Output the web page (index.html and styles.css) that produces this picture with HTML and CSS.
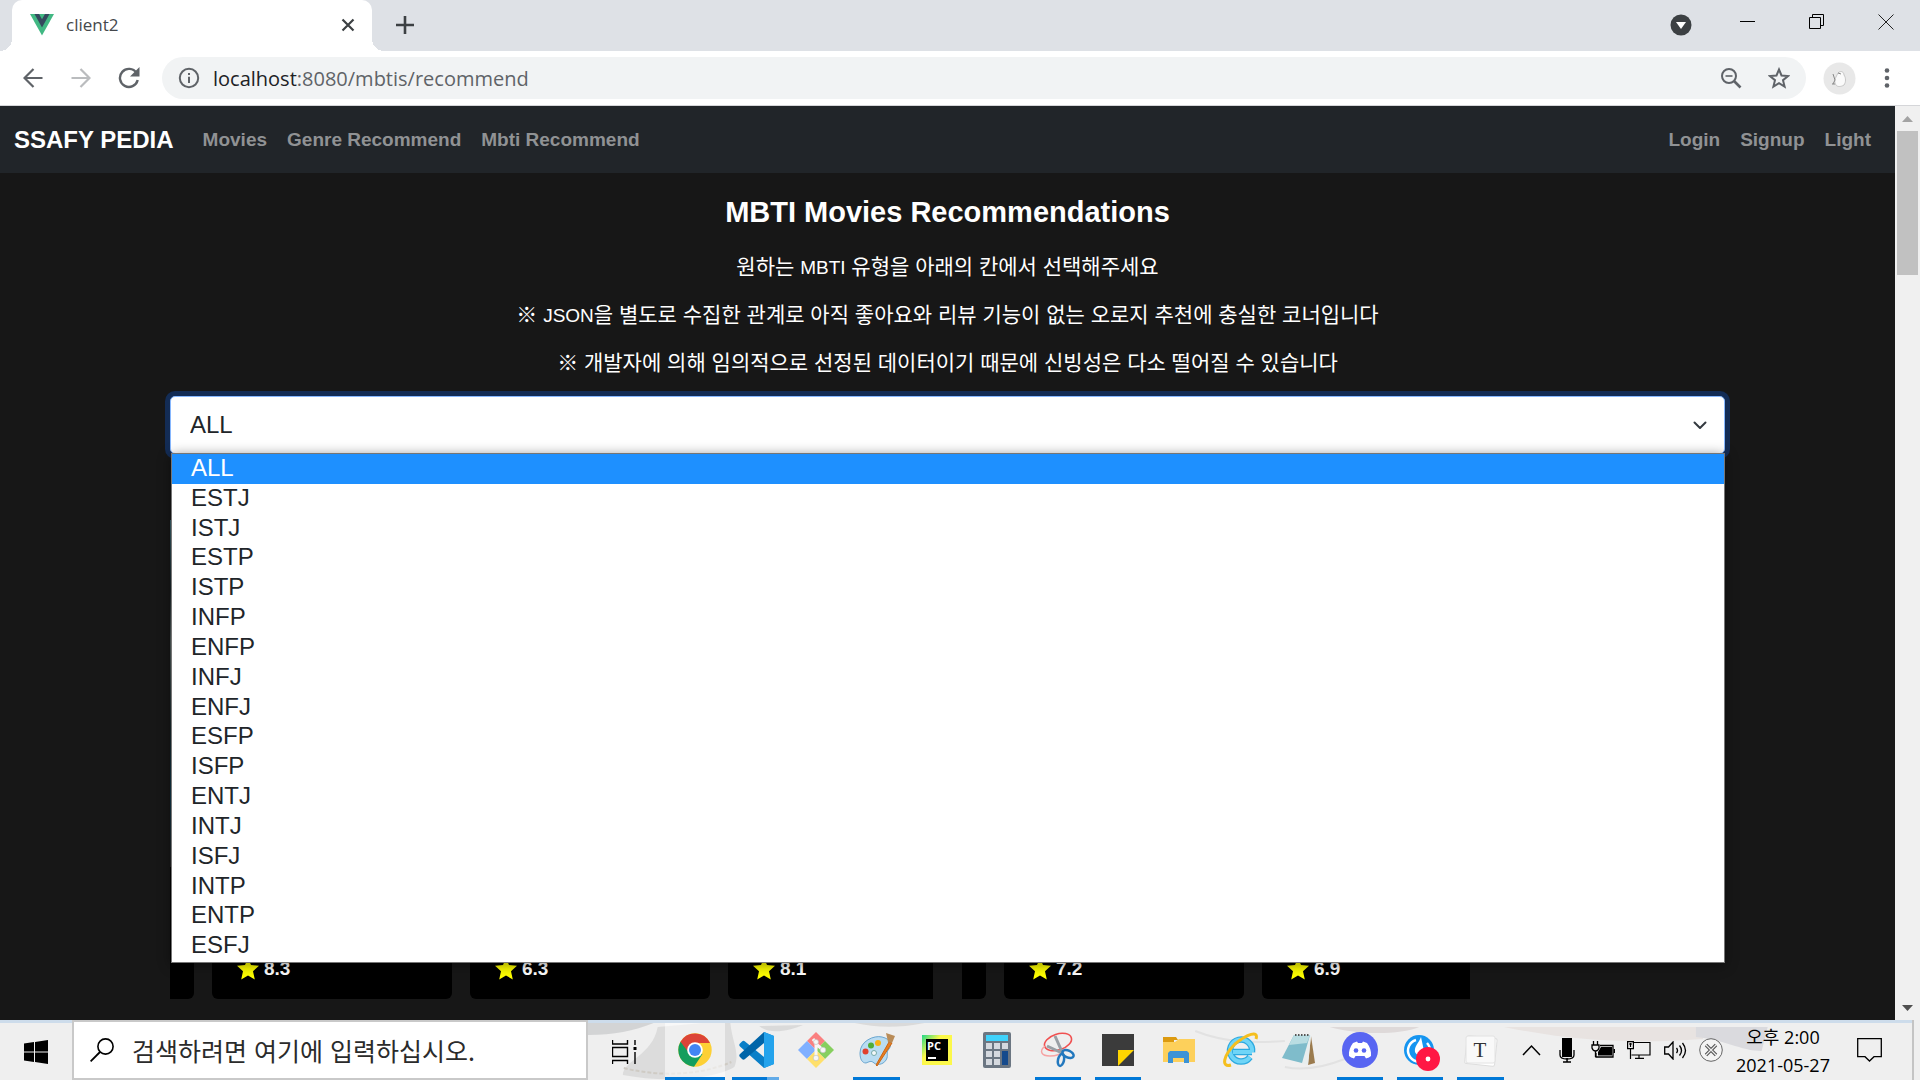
FILE: index.html
```html
<!DOCTYPE html>
<html lang="ko">
<head>
<meta charset="utf-8">
<title>client2</title>
<link rel="stylesheet" href="styles.css">
</head>
<body>
<header class="browser">
  <div class="tabstrip">
    <div class="tab">
      <svg class="favicon" width="24" height="22" viewBox="0 0 24 22"><path fill="#41b883" d="M0 0h24L12 21.500z"/><path fill="#35495e" d="M4.500 0H9l3 5.200L15 0h4.500L12 13.500z"/></svg>
      <span class="tab-title">client2</span>
      <button class="icon-btn" aria-label="탭 닫기"><svg width="14" height="14" viewBox="0 0 14 14"><path d="M1.500 1.500l11 11m0-11l-11 11" stroke="#3c4043" stroke-width="2.200"/></svg></button>
    </div>
    <button class="icon-btn new-tab" aria-label="새 탭"><svg width="18" height="18" viewBox="0 0 18 18"><path d="M9 0v18M0 9h18" stroke="#3c4043" stroke-width="2.600"/></svg></button>
    <div class="window-controls">
      <button class="icon-btn caret" aria-label="탭 검색"><svg width="22" height="22" viewBox="0 0 22 22"><circle cx="11" cy="11" r="10.500" fill="#3c4043"/><path d="M6 8h10l-5 7z" fill="#fff"/></svg></button>
      <button class="icon-btn" aria-label="최소화"><svg width="16" height="16" viewBox="0 0 16 16"><path d="M0 7.500h15" stroke="#000"/></svg></button>
      <button class="icon-btn" aria-label="복원"><svg width="16" height="16" viewBox="0 0 16 16"><path d="M.5 3.500h11v11H.5zM3.500 3.500v-3h11v11h-3" fill="none" stroke="#000"/></svg></button>
      <button class="icon-btn" aria-label="닫기"><svg width="16" height="16" viewBox="0 0 16 16"><path d="M.5.5l15 15m0-15l-15 15" stroke="#222"/></svg></button>
    </div>
  </div>
  <div class="toolbar">
    <button class="icon-btn nav-btn" aria-label="뒤로"><svg width="20" height="20" viewBox="0 0 20 20"><path d="M19.500 10H2M10.500 1L1.500 10l9 9" fill="none" stroke="#5f6368" stroke-width="2.200"/></svg></button>
    <button class="icon-btn nav-btn" aria-label="앞으로"><svg width="20" height="20" viewBox="0 0 20 20"><path d="M.5 10H18M9.500 1l9 9-9 9" fill="none" stroke="#babcbe" stroke-width="2.200"/></svg></button>
    <button class="icon-btn nav-btn" aria-label="새로고침"><svg width="22" height="22" viewBox="0 0 22 22"><path d="M18.500 6A9 9 0 1 0 19.700 13" fill="none" stroke="#5f6368" stroke-width="2.400"/><path d="M21.500 0v9.500H12z" fill="#5f6368"/></svg></button>
    <div class="omnibox">
      <svg width="22" height="22" viewBox="0 0 22 22"><circle cx="11" cy="11" r="9.200" fill="none" stroke="#5f6368" stroke-width="2"/><path d="M11 9.800V16M11 6v2" stroke="#5f6368" stroke-width="2"/></svg>
      <div class="url"><span class="host">localhost</span>:8080/mbtis/recommend</div>
      <button class="icon-btn" aria-label="확대/축소"><svg width="22" height="22" viewBox="0 0 22 22"><circle cx="9" cy="9" r="7" fill="none" stroke="#5f6368" stroke-width="2"/><path d="M5.500 9h7" stroke="#5f6368" stroke-width="1.600"/><path d="M14 14l6.500 6.500" stroke="#5f6368" stroke-width="2.600"/></svg></button>
      <button class="icon-btn" aria-label="북마크"><svg width="22" height="22" viewBox="0 0 22 22"><path d="M11 2.500l2.500 6 6.500.5-5 4.200 1.600 6.400L11 16.200l-5.600 3.400L7 13.200 2 9l6.500-.5z" fill="none" stroke="#5f6368" stroke-width="2"/></svg></button>
    </div>
    <button class="icon-btn avatar" aria-label="프로필"><svg width="33" height="33" viewBox="0 0 33 33"><circle cx="16.500" cy="16.500" r="16" fill="#e8e8e8"/><path d="M15 11c3-3 6-1 6 2 2 3 2 7 0 10-3 2-7 2-8 0-2-3-1-6 0-8z" fill="#fafafa" stroke="#bbb" stroke-width=".8"/><path d="M10 12l2 6-2 4M9 22h3M15 11l3 1" fill="none" stroke="#888"/></svg></button>
    <button class="icon-btn menu" aria-label="메뉴"><svg width="6" height="20" viewBox="0 0 6 20"><g fill="#5f6368"><circle cx="3" cy="2.500" r="2.300"/><circle cx="3" cy="10" r="2.300"/><circle cx="3" cy="17.500" r="2.300"/></g></svg></button>
  </div>
</header>

<div class="viewport">
  <div class="page">
    <nav class="navbar">
      <a class="brand" href="#">SSAFY PEDIA</a>
      <a href="#">Movies</a>
      <a href="#">Genre Recommend</a>
      <a href="#">Mbti Recommend</a>
      <div class="account">
        <a href="#">Login</a>
        <a href="#">Signup</a>
        <a href="#">Light</a>
      </div>
    </nav>
    <main class="content">
      <h1>MBTI Movies Recommendations</h1>
      <p><label for="mbti">원하는 <span class="latin">MBTI</span> 유형을 아래의 칸에서 선택해주세요</label></p>
      <p>※ <span class="latin">JSON</span>을 별도로 수집한 관계로 아직 좋아요와 리뷰 기능이 없는 오로지 추천에 충실한 코너입니다</p>
      <p>※ 개발자에 의해 임의적으로 선정된 데이터이기 때문에 신빙성은 다소 떨어질 수 있습니다</p>
      <div class="picker">
        <select id="mbti"><option>ALL</option><option>ESTJ</option><option>ISTJ</option><option>ESTP</option></select>
        <svg class="chevron" width="14" height="9" viewBox="0 0 14 9"><path d="M1.500 1.500L7 7l5.500-5.500" fill="none" stroke="#343a40" stroke-width="2" stroke-linecap="round" stroke-linejoin="round"/></svg>
        <ul class="options" role="listbox" aria-label="MBTI">
          <li role="option" class="active" aria-selected="true">ALL</li>
          <li role="option">ESTJ</li>
          <li role="option">ISTJ</li>
          <li role="option">ESTP</li>
          <li role="option">ISTP</li>
          <li role="option">INFP</li>
          <li role="option">ENFP</li>
          <li role="option">INFJ</li>
          <li role="option">ENFJ</li>
          <li role="option">ESFP</li>
          <li role="option">ISFP</li>
          <li role="option">ENTJ</li>
          <li role="option">INTJ</li>
          <li role="option">ISFJ</li>
          <li role="option">INTP</li>
          <li role="option">ENTP</li>
          <li role="option">ESFJ</li>
        </ul>
      </div>
      <div class="carousels">
        <section class="carousel">
          <article class="card"><div class="poster"></div></article>
          <article class="card"><div class="poster"></div><div class="rating"><svg class="star" viewBox="0 0 22 22"><use href="#star"/></svg>8.3</div></article>
          <article class="card"><div class="poster"></div><div class="rating"><svg class="star" viewBox="0 0 22 22"><use href="#star"/></svg>6.3</div></article>
          <article class="card"><div class="poster"></div><div class="rating"><svg class="star" viewBox="0 0 22 22"><use href="#star"/></svg>8.1</div></article>
        </section>
        <section class="carousel">
          <article class="card"><div class="poster"></div></article>
          <article class="card"><div class="poster"></div><div class="rating"><svg class="star" viewBox="0 0 22 22"><use href="#star"/></svg>7.2</div></article>
          <article class="card"><div class="poster"></div><div class="rating"><svg class="star" viewBox="0 0 22 22"><use href="#star"/></svg>6.9</div></article>
        </section>
      </div>
    </main>
  </div>
  <div class="scrollbar">
    <svg width="11" height="6" viewBox="0 0 11 6"><path d="M0 6h11L5.500 0z" fill="#a3a3a3"/></svg>
    <div class="thumb"></div>
    <svg class="down" width="11" height="6" viewBox="0 0 11 6"><path d="M0 0h11L5.500 6z" fill="#505050"/></svg>
  </div>
</div>

<footer class="taskbar">
  <button class="start" aria-label="시작"><svg width="24" height="24" viewBox="0 0 24 24"><path d="M0 3.500l10-1.400V11.400H0zM11 2l13-2v11.400H11zM0 12.400h10v9.500L0 20.500zM11 12.400h13V24l-13-2z"/></svg></button>
  <div class="search">
    <svg width="24" height="24" viewBox="0 0 24 24"><circle cx="15.500" cy="8.500" r="7.600" fill="none" stroke="#000" stroke-width="1.600"/><path d="M10 14L.6 23.400" stroke="#000" stroke-width="1.800"/></svg>
    <input type="text" aria-label="검색" placeholder="검색하려면 여기에 입력하십시오.">
  </div>
  <div class="dock">
    <svg class="wallpaper" viewBox="0 0 1330 57" preserveAspectRatio="none">
      <path d="M0 0h66c-20 8-40 12-66 12z" fill="#d3d4d5"/>
      <path d="M70 4l45-4h28c2 20 10 30 4 44-20 12-70 16-112 8 0-14 30-20 35-48z" fill="#dcdcdc"/>
      <path d="M36 45c40 10 80 6 108-6" stroke="#cfcbc4" stroke-width="2" fill="none" stroke-dasharray="4 2"/>
      <path d="M172 3c10 9 30 5 44-1zM268 0c20 4 40 6 70 0z" fill="#dadada"/>
      <path d="M610 8c30 12 60 12 90 10M700 44c20 4 40 0 60-8" stroke="#e2e2e2" stroke-width="2" fill="none"/>
      <path d="M745 4h90c-20 8-60 8-90 0z" fill="#ded9d9"/>
      <path d="M920 4h200v12c-80 6-140 0-200-12z" fill="#e8e3e1"/>
      <path d="M1113 4h72l-6 24c-20 0-40-12-66-14z" fill="#dadade"/>
    </svg>
    <button class="task-view" aria-label="작업 보기"><svg width="25" height="24" viewBox="0 0 25 24"><path d="M.5 0v4h15V0M.5 24v-3.500h15V24M.5 7.500h15v9H.5zM23 0v5M23 12v12" fill="none" stroke="#000" stroke-width="1.400"/><path d="M21.500 7h3v3h-3z"/></svg></button>
    <div class="apps">
      <button class="app running current" aria-label="Chrome"><svg viewBox="0 0 36 36"><circle cx="18" cy="18" r="16.700" fill="#fdd035"/><path d="M18 18L3.500 9.700A16.700 16.700 0 0 0 17 34.700L25.500 22z" fill="#149e5d"/><path d="M3.500 9.700A16.700 16.700 0 0 1 33 11H18l-7.500 8z" fill="#dc4437"/><circle cx="18" cy="18" r="7.800" fill="#fff"/><circle cx="18" cy="18" r="6" fill="#4285f4"/></svg></button>
      <button class="app running grouped" aria-label="VS Code"><svg viewBox="0 0 36 36"><path d="M26 0l10 4v28l-10 4L2 14.500c-1-1-1-2 0-3l2-2c1-1 2-1 3 0L26 25z" fill="#0a7fc8"/><path d="M26 0L2 22c-1 1-1 2 0 3l2 2c1 1 2 1 3 0L26 11z" fill="#0065a9"/><path d="M26 0l10 4v28l-10 4z" fill="#24a3ec"/></svg></button>
      <button class="app" aria-label="Git"><svg viewBox="0 0 36 36"><path d="M18 0l9 9-9 9-9-9z" fill="#fa8080"/><path d="M27 9l9 9-9 9-9-9z" fill="#86cf5f"/><path d="M9 9l9 9-9 9-9-9z" fill="#80b0ff"/><path d="M18 18l9 9-9 9-9-9z" fill="#ffe06b"/><path d="M15 7l3 4v15M18 12l7 6" stroke="#f7f7f7" stroke-width="3" fill="none"/><g fill="#f7f7f7" stroke="#bbb" stroke-width=".6"><circle cx="18" cy="10" r="2.500"/><circle cx="25" cy="18" r="2.800"/><circle cx="18" cy="26" r="2.800"/></g></svg></button>
      <button class="app running" aria-label="그림판"><svg viewBox="0 0 36 36"><path d="M2 21C2 9 16 3 24 5c9 2 10 8 7 12-3 3-1 5-2 9-2 6-9 8-13 5-3-3-5-1-8 0-4 0-6-4-6-10z" fill="#b9dcf2" stroke="#6ba6cf"/><circle cx="16" cy="21" r="2.500" fill="#f4f8fa" stroke="#7aa"/><circle cx="7.500" cy="19.500" r="3" fill="#e0402e"/><circle cx="13" cy="13.500" r="3" fill="#4fad38"/><circle cx="20" cy="11" r="3" fill="#f8b117"/><path d="M31 10l3 1-15 23-1-1z" fill="#e87e20" stroke="#c96515"/><path d="M28 1l9 3-3 7-4-1z" fill="#b98c58"/></svg></button>
      <button class="app" aria-label="PyCharm"><svg viewBox="0 0 36 36"><defs><linearGradient id="pc" x2="1" y2=".8"><stop stop-color="#21d789"/><stop offset=".4" stop-color="#fcf84a"/><stop offset="1" stop-color="#fcf84a"/></linearGradient></defs><path d="M3 3h30v30H3z" fill="url(#pc)"/><path d="M7 7h22v22H7z"/><path d="M9 25h8v2H9z" fill="#fff"/><text x="8" y="18" fill="#fff" class="pc-label">PC</text></svg></button>
      <button class="app" aria-label="계산기"><svg viewBox="0 0 36 36"><rect x="4" width="28" height="36" rx="2" fill="#6b7682"/><path d="M7 3h22v6H7z" fill="#3fd2fb"/><g fill="#d5d9df"><path d="M7 11h6v6H7zM15 11h6v6h-6zM23 11h6v6h-6zM7 19h6v6H7zM15 19h6v6h-6zM7 27h6v6H7zM15 27h6v6h-6z"/></g><path d="M23 19h6v14h-6z" fill="#154a8c"/></svg></button>
      <button class="app running" aria-label="캡처 도구"><svg viewBox="0 0 36 36"><g fill="none"><ellipse cx="18" cy="10" rx="14" ry="8" transform="rotate(-18 18 10)" stroke="#f05050" stroke-width="1.600"/><path d="M5 14c-6 5-4 10 5 10 6 0 11-2 14-5" stroke="#f6a3a3" stroke-width="1.400"/><path d="M15 4l8 18M7 14l15 7" stroke="#999fa5" stroke-width="3"/><ellipse cx="21" cy="28" rx="3" ry="6" transform="rotate(12 21 28)" stroke="#2278be" stroke-width="2.500"/><ellipse cx="28" cy="22" rx="6" ry="3.500" transform="rotate(25 28 22)" stroke="#2278be" stroke-width="2.500"/></g></svg></button>
      <button class="app running" aria-label="스티커 메모"><svg viewBox="0 0 36 36"><path d="M2 2h32v32H2z" fill="#3b3b3b"/><path d="M18 18h16L18 34z" fill="#ffd500"/></svg></button>
      <button class="app" aria-label="파일 탐색기"><svg viewBox="0 0 36 36"><path d="M2 5h13l2 3h-4v4H2z" fill="#dc9a10"/><path d="M2 10h12l4-3h16v23H2z" fill="#fdd05b"/><path d="M7 31V21l2-2h17l2 2v10h-5v-5H12v5z" fill="#3c93d6"/></svg></button>
      <button class="app" aria-label="Internet Explorer"><svg viewBox="0 0 36 36"><path d="M31 20H12M29 25a11 11 0 1 1 2-5" fill="none" stroke="#2da9df" stroke-width="6.500"/><path d="M31 20H12M29 25a11 11 0 1 1 2-5" fill="none" stroke="#6fd5f7" stroke-width="4"/><path d="M10 33C0 36 2 24 14 12 26 2 38-2 35 7" fill="none" stroke="#f5bf1e" stroke-width="3"/></svg></button>
      <button class="app" aria-label="메모장"><svg viewBox="0 0 36 36"><path d="M30 4l4 27-7 2z" fill="#9b7b4e"/><path d="M13 3h17l-3 30-8-2z" fill="#e8eeee"/><path d="M13 3h16l-8 28L1 26z" fill="#7fbccb"/><path d="M13 3h16l-3 8-18 2z" fill="#b9dde2"/><path d="M14 3h15" stroke="#555" stroke-width="2" stroke-dasharray="1.500 1.500"/></svg></button>
      <button class="app running" aria-label="Discord"><svg viewBox="0 0 36 36"><circle cx="18" cy="18" r="18" fill="#5865f2"/><path d="M11 11l4-1.500 1 1.500h4l1-1.500 4 1.500c3 4 4.500 8 4 13-2 1.500-3.500 2-5 2.500L22.500 24h-9L12 26.500c-1.500-.5-3-1-5-2.500-.5-5 1-9 4-13z" fill="#fff"/><circle cx="14" cy="18.500" r="2.300" fill="#5865f2"/><circle cx="22" cy="18.500" r="2.300" fill="#5865f2"/></svg></button>
      <button class="app running" aria-label="미리노트"><svg viewBox="0 0 36 36"><circle cx="17" cy="18" r="15" fill="#1595f0"/><path d="M14 8a11 11 0 1 0 11 3" fill="none" stroke="#fff" stroke-width="2.500"/><path d="M19 5c-2 6-7 9-6 15 2 5 8 3 9-1z" fill="#fff"/><circle cx="26" cy="27" r="12" fill="#ff1744"/><circle cx="26" cy="27" r="2.400" fill="#fff"/></svg></button>
      <button class="app running" aria-label="Typora"><svg viewBox="0 0 36 36"><rect x="3" y="5" width="30" height="28" rx="2" fill="#fff" stroke="#ddd" transform="rotate(6 18 18)"/><rect x="3" y="4" width="29" height="27" rx="2" fill="#f9f9f9" stroke="#e2e2e2"/><text x="17" y="25" text-anchor="middle" class="ty-label">T</text></svg></button>
    </div>
    <div class="tray">
      <button aria-label="숨겨진 아이콘"><svg width="19" height="12" viewBox="0 0 19 12"><path d="M1 11l8.500-9L18 11" fill="none" stroke="#000" stroke-width="1.500"/></svg></button>
      <button aria-label="마이크"><svg width="16" height="25" viewBox="0 0 16 25"><path d="M3 0h10v19H3zM7.300 20h1.500v4H7.300z"/><path d="M1 12v5q0 4 7 4t7-4v-5M4 24h8" fill="none" stroke="#000" stroke-width="1.300"/></svg></button>
      <button aria-label="전원"><svg width="24" height="18" viewBox="0 0 24 18"><path d="M9 4.500h13V16H5v-4M23.500 8v4M2.500 0v4M6.500 0v4M1 4h7v3q-1 3-3.500 3T1 7zM4.500 10v6" fill="none" stroke="#000" stroke-width="1.300"/><path d="M10 6h11v8.500H7V11z"/></svg></button>
      <button aria-label="네트워크"><svg width="24" height="18" viewBox="0 0 24 18"><path d="M7 1.500h16V14H4.500M12 14v3M8 17.400h9M.6.6h5.800v7H.6zM3.500 8v10M3.500 2v4M2 3h3" fill="none" stroke="#000" stroke-width="1.200"/></svg></button>
      <button aria-label="볼륨"><svg width="23" height="19" viewBox="0 0 23 19"><path d="M.7 6h3.800L9 1v17l-4.500-5H.7zM12.500 7q2 2.500 0 5M15.500 4.500q4 5 0 10M18.500 2q6 7.500 0 15" fill="none" stroke="#000" stroke-width="1.300"/></svg></button>
      <button aria-label="상태"><svg width="24" height="24" viewBox="0 0 24 24"><circle cx="12" cy="12" r="11.300" fill="#f4f4f4" stroke="#666"/><path d="M7 7l10 10M17 7L7 17" stroke="#555" stroke-width="3.400"/><path d="M7 7l10 10M17 7L7 17" stroke="#eee" stroke-width="1.200"/></svg></button>
    </div>
    <div class="clock"><span>오후 2:00</span><span>2021-05-27</span></div>
    <button class="notify" aria-label="알림 센터"><svg width="25" height="24" viewBox="0 0 25 24"><path d="M.7.7h23.600v18H17L12.500 23 8 18.700H.7z" fill="none" stroke="#000" stroke-width="1.300"/></svg></button>
  </div>
  <button class="show-desktop" aria-label="바탕 화면 보기"></button>
</footer>

<svg class="symbols" aria-hidden="true"><symbol id="star" viewBox="0 0 22 22"><path d="M11 0l3 7 8 .8-6 5.400L17.800 21.500 11 17.500l-6.800 4L6 13.200 0 7.800 8 7z" fill="#ff0"/></symbol></svg>
</body>
</html>
```
FILE: styles.css
```css
* { box-sizing: border-box; }

body {
  margin: 0;
  height: 100vh;
  display: flex;
  flex-direction: column;
  overflow: hidden;
  font-family: "Liberation Sans", "Noto Sans CJK KR", sans-serif;
}

button {
  border: 0;
  padding: 0;
  background: none;
  display: flex;
  align-items: center;
  justify-content: center;
}

svg { display: block; flex: none; }
.symbols { position: absolute; width: 0; height: 0; }

/* Browser frame */
.browser { flex: none; font-family: "Open Sans", "Noto Sans", sans-serif; }

.tabstrip {
  display: flex;
  align-items: center;
  height: 51px;
  padding-left: 12px;
  background: #dee1e6;
}

.tab {
  position: relative;
  display: flex;
  align-items: center;
  width: 360px;
  height: 51px;
  padding: 0 17px 2px 18px;
  border-radius: 10px 10px 0 0;
  background: #fff;
}

.tab::before, .tab::after {
  content: "";
  position: absolute;
  bottom: 0;
  width: 12px;
  height: 12px;
}
.tab::before { left: -12px; background: radial-gradient(circle at 0 0, transparent 12px, #fff 12px); }
.tab::after { right: -12px; background: radial-gradient(circle at 100% 0, transparent 12px, #fff 12px); }

.tab-title { flex: 1; padding-left: 12px; font-size: 17px; color: #45484c; }
.new-tab { margin-left: 24px; padding-bottom: 2px; }

.window-controls { display: flex; align-items: flex-start; gap: 53px; align-self: flex-start; margin-left: auto; padding: 14px 26px 0 0; }
.window-controls .caret { margin-right: -5px; }

.toolbar {
  display: flex;
  align-items: center;
  height: 55px;
  padding: 0 30px 0 9px;
  border-bottom: 1px solid #d5d6d9;
  background: #fff;
}

.nav-btn { width: 48px; }

.omnibox {
  flex: 1;
  display: flex;
  align-items: center;
  height: 42px;
  margin: 0 17px 0 9px;
  padding: 0 16px;
  border-radius: 21px;
  background: #f1f3f4;
}
.omnibox .icon-btn { margin-left: 26px; }
.url { flex: 1; padding-left: 13px; font-size: 20px; color: #5f6368; }
.host { color: #202124; }
.menu { margin-left: 28px; }

/* Page */
.viewport { flex: 1; min-height: 0; display: flex; }

.page { flex: 1; min-width: 0; overflow: hidden; background: #171717; color: #fff; }

.navbar {
  display: flex;
  align-items: center;
  gap: 20px;
  height: 67px;
  padding: 0 24px 0 14px;
  background: #212529;
}
.navbar a { font-size: 19px; font-weight: 700; color: #909294; text-decoration: none; }
.navbar .brand { margin-right: 9px; font-size: 24px; color: #fff; }
.account { display: flex; gap: 20px; margin-left: auto; }

.content { padding: 22px 170px 0; }

h1 { margin: 0 0 22px; font-size: 29px; line-height: 35px; text-align: center; }
p { margin: 0 0 19px; font-size: 21px; line-height: 29px; text-align: center; }
.latin { font-size: 19px; line-height: 1; }

.picker { position: relative; }

.picker select {
  appearance: none;
  display: block;
  width: 100%;
  height: 58px;
  padding: 0 19px 2px;
  border: 1px solid #86b7fe;
  border-radius: 5px;
  background: #fff;
  color: #212529;
  font: 24px "Liberation Sans", sans-serif;
  box-shadow: 0 0 0 5px #132c55;
}

.chevron { position: absolute; right: 18px; top: 25px; }

.options {
  position: absolute;
  z-index: 1;
  top: 57px;
  left: 1px;
  right: 0;
  display: flex;
  flex-direction: column;
  height: 510px;
  margin: 0;
  padding: 0 0 1px;
  border: 1px solid #767676;
  background: #fff;
  box-shadow: 0 2px 12px rgba(0, 0, 0, .45);
  color: #212529;
  font-size: 24px;
  line-height: 28px;
  list-style: none;
}
.options li { flex: 1; padding-left: 19px; }
.options .active { background: #1e90ff; color: #fff; }

.carousels {
  display: grid;
  grid-template-columns: 763fr 508fr 226fr;
  gap: 29px;
  margin-top: 66px;
}

.carousel { display: flex; gap: 18px; overflow: hidden; }

.card {
  flex: none;
  width: 240px;
  height: 479px;
  border-radius: 6px;
  overflow: hidden;
  background: #000;
}
.card:first-child { margin-left: -216px; }
.poster { height: 347px; background: linear-gradient(#3c6570, #182327 20%, #54605f 35%, #17282c 60%, #12384a 80%, #222); }
.rating { display: flex; align-items: center; gap: 5px; padding: 90px 0 0 25px; font-size: 19px; font-weight: 700; line-height: 24px; }
.star { width: 22px; height: 22px; }

.scrollbar {
  display: flex;
  flex-direction: column;
  align-items: center;
  width: 25px;
  padding: 10px 0 9px;
  background: #f0f0f0;
}
.thumb { width: 21px; height: 144px; margin-top: 9px; background: #c1c1c1; }
.down { margin-top: auto; }

/* Taskbar */
.taskbar {
  flex: none;
  display: flex;
  height: 60px;
  background: #efefef;
  font-family: "Open Sans", "Noto Sans CJK KR", sans-serif;
}

.start { width: 72px; border-top: 3px solid #cddceb; }

.search {
  display: flex;
  align-items: center;
  width: 516px;
  padding-left: 16px;
  border: 2px solid #c9c9c9;
  background: #fff;
}
.search input {
  flex: 1;
  min-width: 0;
  padding: 0 0 0 18px;
  border: 0;
  background: none;
  font: 25px "Noto Sans CJK KR", sans-serif;
}
.search input::placeholder { color: #2b2b2b; opacity: 1; }

.dock {
  position: relative;
  flex: 1;
  display: flex;
  align-items: center;
  padding-right: 30px;
  border-top: 3px solid #cddceb;
}
.dock > :not(.wallpaper) { position: relative; }
.dock > .wallpaper { position: absolute; left: 0; top: 0; width: 100%; height: 57px; }
.task-view { width: 77px; padding-right: 5px; }

.apps { flex: 1; display: flex; align-self: stretch; }
.app { position: relative; flex: 1; padding-bottom: 3px; }
.app svg { width: 36px; height: 36px; overflow: visible; }
.app.running::after {
  content: "";
  position: absolute;
  left: 7px;
  right: 7px;
  bottom: 0;
  height: 3px;
  background: #0078d7;
}
.app.current { background: rgba(255, 255, 255, .55); }
.app.current::after { left: 0; right: 0; }
.app.grouped::after { background: linear-gradient(90deg, #0078d7 75%, #62abe8 75%); }
.pc-label { font: 700 11px "Open Sans", sans-serif; }
.ty-label { font: 21px "Liberation Serif", serif; fill: #333; }

.tray { display: flex; align-items: center; margin-left: 2px; padding-bottom: 3px; }
.tray button { width: 36px; }

.clock {
  display: flex;
  flex-direction: column;
  align-items: center;
  width: 108px;
  padding-bottom: 2px;
  font-size: 18px;
  line-height: 28px;
}
.notify { width: 25px; margin-left: 20px; padding-bottom: 3px; }
.show-desktop { width: 8px; border-left: 2px solid #c4c4c4; }
```
